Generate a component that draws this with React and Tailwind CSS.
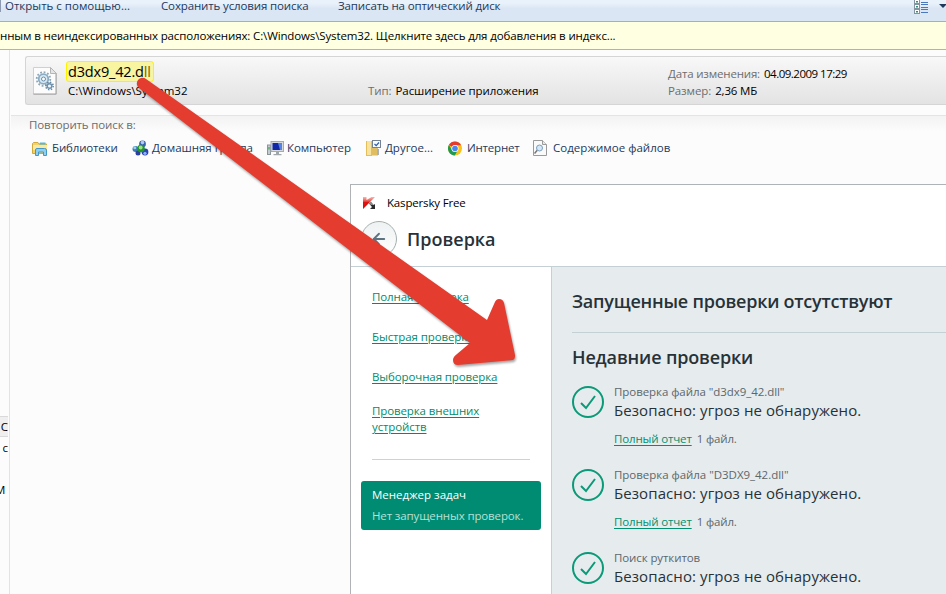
import { ArrowLeft } from "lucide-react";

const checks = [
  { id: 1, title: 'Проверка файла "d3dx9_42.dll"', files: "1 файл.", titleClass: "tracking-[-0.06px]" },
  { id: 2, title: 'Проверка файла "D3DX9_42.dll"', files: "1 файл.", titleClass: "tracking-[-0.03px]" },
  { id: 3, title: "Поиск руткитов", files: "", titleClass: "tracking-[-0.1px]" },
];

function LibraryIcon() {
  return (
    <svg width="16" height="16" viewBox="0 0 16 16">
      <path d="M0.5 3.5 L1.5 2.5 H6 L7 4 H14.5 V13.5 H0.5Z" fill="#f0d36b" stroke="#d2a93c" />
      <path d="M8 2.5 h5.5 v2 h-6z" fill="#57b7d8" />
      <path d="M1 5 H15 V10 H1Z" fill="#fae9a0" />
      <path d="M3.5 15.5 V10 Q3.5 8.5 5 8.5 H12.5 Q14.5 8.5 14.5 10 V15.5 H11.5 V12 H6.5 V15.5Z" fill="#8fd0ee" stroke="#4298c8" />
    </svg>
  );
}

function HomegroupIcon() {
  return (
    <svg width="17" height="16" viewBox="0 0 17 16">
      <circle cx="10.5" cy="4" r="3.4" fill="#3a62b0" />
      <circle cx="10.5" cy="2.6" r="1.8" fill="#b4caee" />
      <circle cx="3.5" cy="9" r="3" fill="#3c7bb4" />
      <circle cx="2.8" cy="7.8" r="1.5" fill="#9fd0e8" />
      <circle cx="13" cy="12" r="3.4" fill="#2743b8" />
      <circle cx="13" cy="13.3" r="1.6" fill="#8fb0f2" />
      <circle cx="6" cy="13" r="2.5" fill="#2b3f9c" />
      <circle cx="9" cy="8.5" r="3.8" fill="#24962b" />
      <circle cx="8.7" cy="7.5" r="1.9" fill="#a2e28b" />
    </svg>
  );
}

function ComputerIcon() {
  return (
    <svg width="17" height="16" viewBox="0 0 17 16">
      <rect x="0.5" y="5" width="3" height="9.5" fill="#c4cbd0" stroke="#8b949a" />
      <rect x="1.3" y="7" width="1.4" height="2.5" fill="#4bab5c" />
      <rect x="4" y="1.5" width="12.5" height="10" fill="#d6dadd" stroke="#a3abb1" />
      <rect x="5.5" y="3" width="9.5" height="7" fill="#1226a8" />
      <path d="M11 3 H15 V10 H13Z" fill="#5683df" />
      <path d="M9 12 h3 v2 h2.5 v1.2 h-8 v-1.2 h2.5z" fill="#a0a7ac" />
    </svg>
  );
}

function OtherIcon() {
  return (
    <svg width="16" height="16" viewBox="0 0 16 16">
      <path d="M0 1 H6 V16 H0Z" fill="#e3be5b" />
      <path d="M1 1 H5 V15 H1Z" fill="#f7e2a0" />
      <path d="M5 8 H12 V15.5 H5Z" fill="#e0bd60" />
      <path d="M11 9 h2 v6 h-2z" fill="#a9b1b8" />
      <rect x="6.5" y="0.5" width="8" height="7" fill="#f7fbff" stroke="#75828f" />
      <path d="M8.5 4 l1.7 1.7 l2.8 -3.2" fill="none" stroke="#2a5db0" strokeWidth="1.2" />
    </svg>
  );
}

function ChromeIcon() {
  return (
    <svg width="14" height="15" viewBox="0 0 14 14">
      <circle cx="7" cy="7" r="7" fill="#fbc116" />
      <path d="M7 7 L0.9 3.5 A7 7 0 0 1 13.1 3.7 L7 3.7Z" fill="#e33b2e" />
      <path d="M0.9 3.5 A7 7 0 0 0 6.8 14 L9.9 8.6 L7 7 L4 8.6Z" fill="#219a50" />
      <circle cx="7" cy="7" r="3.5" fill="#fff" />
      <circle cx="7" cy="7" r="2.8" fill="#4688f0" />
    </svg>
  );
}

function FileContentIcon() {
  return (
    <svg width="14" height="16" viewBox="0 0 14 16">
      <path d="M0.5 0.5 H9.5 L13.5 4.5 V15.5 H0.5Z" fill="#fafafa" stroke="#9a9a9a" />
      <path d="M9.5 0.5 V4.5 H13.5" fill="#e8e8e8" stroke="#9a9a9a" />
      <path d="M1.5 13.5 L4.5 10" stroke="#777" strokeWidth="1.5" />
      <circle cx="6.5" cy="8" r="3" fill="#d3e9f9" stroke="#7d9fbd" />
    </svg>
  );
}

function DllIcon() {
  return (
    <svg width="24" height="28" viewBox="0 0 24 28">
      <path d="M0.5 0.5 H17.5 L23.5 6.5 V27.5 H0.5Z" fill="#fcfcfc" stroke="#d0d0d0" />
      <path d="M23 6.5 V27 H0.5" fill="none" stroke="#9e9e9e" />
      <path d="M17.5 0.5 V6.5 H23.5Z" fill="#e5e5e5" stroke="#b5b5b5" />
      <circle cx="10.5" cy="12" r="6.8" fill="none" stroke="#8ea6b7" strokeWidth="1.8" strokeDasharray="1.8 1.76" />
      <circle cx="10.5" cy="12" r="4.8" fill="#d7eaf5" stroke="#8aabc2" strokeWidth="1.8" />
      <circle cx="10.5" cy="12" r="2" fill="#fcfcfc" stroke="#6b8da8" />
      <circle cx="16.5" cy="19" r="3.7" fill="none" stroke="#67849c" strokeWidth="1.5" strokeDasharray="1.4 1.5" />
      <circle cx="16.5" cy="19" r="2.3" fill="#eef6fb" stroke="#6e93b2" strokeWidth="1.5" />
    </svg>
  );
}

function ViewIcon() {
  return (
    <svg width="15" height="14" viewBox="0 0 15 14">
      {[-1, 4, 9].map((y) => (
        <g key={y}>
          <rect x="0.5" y={y + 0.5} width="5" height="4" fill="#fff" stroke="#8592a0" />
          <rect x="2" y={y + 2} width="2" height="1.5" fill="#2f8f78" />
          <path d={`M7 ${y + 0.5} h7 M7 ${y + 3.5} h7`} stroke="#4a78bd" />
        </g>
      ))}
    </svg>
  );
}

function KasperskyLogo() {
  return (
    <svg width="13" height="13" viewBox="0 0 13 13">
      <defs>
        <linearGradient id="kred" x1="0" y1="0" x2="0" y2="1">
          <stop offset="0" stopColor="#f6b9b6" />
          <stop offset="0.35" stopColor="#e8504a" />
          <stop offset="0.45" stopColor="#df1410" />
          <stop offset="1" stopColor="#d80d0d" />
        </linearGradient>
      </defs>
      <path d="M0 0 H3.5 V3 L8.5 0 H12 L6 6 L0 12Z" fill="url(#kred)" />
      <path d="M6 6.5 L8 5 L10.5 8 L12 7 V12 H7 L9 10Z" fill="#2a2a2a" />
      <path d="M6 6.5 L8 5 L10.5 8 H8Z" fill="#8a8a8a" />
    </svg>
  );
}

function CheckCircle() {
  return (
    <svg width="32" height="32" viewBox="0 0 32 32" className="shrink-0">
      <circle cx="16" cy="16" r="15" fill="none" stroke="#0a9a78" strokeWidth="2" />
      <path d="M9 17 L14 22 L23 10" fill="none" stroke="#0a9a78" strokeWidth="2" />
    </svg>
  );
}

const places = [
  { label: "Библиотеки", Icon: LibraryIcon, box: "w-[100px] gap-1", text: "tracking-[-0.15px]" },
  { label: "Домашняя группа", Icon: HomegroupIcon, box: "w-[135px] gap-[3px]", text: "tracking-[-0.02px]" },
  { label: "Компьютер", Icon: ComputerIcon, box: "w-[99px] gap-[3px]", text: "tracking-[-0.1px]" },
  { label: "Другое...", Icon: OtherIcon, box: "w-[82px] gap-[3px]", text: "" },
  { label: "Интернет", Icon: ChromeIcon, box: "w-[85px] gap-[5px]", text: "tracking-[-0.2px]" },
  { label: "Содержимое файлов", Icon: FileContentIcon, box: "gap-[6px]", text: "tracking-[0.03px]" },
];

function Explorer() {
  return (
    <div className="flex h-full flex-col text-[11.5px] leading-4 text-black">
      {/* toolbar */}
      <div className="flex h-[22px] shrink-0 border-b border-[#a0afc3] bg-linear-to-b from-[#e9f2fb] from-15% to-[#dae6f4] to-40% leading-[11px] text-[#1e395b]">
        <div className="h-3 w-px bg-[#8b9ab0]" />
        <div className="ml-1 w-[156px]">Открыть с помощью...</div>
        <div className="w-[177px] tracking-[-0.13px]">Сохранить условия поиска</div>
        <div className="flex-1 tracking-[-0.13px]">Записать на оптический диск</div>
        <ViewIcon />
        <svg width="8" height="4" viewBox="0 0 8 4" className="mt-1 ml-[10px] mr-[-1px]">
          <path d="M0 0 H8 L4 4Z" fill="#1e395b" />
        </svg>
      </div>

      {/* index notice */}
      <div className="flex h-7 shrink-0 items-center whitespace-nowrap border-b border-[#b4b4a6] bg-[#ffffe1] tracking-[-0.13px]">
        нным в неиндексированных расположениях: C:\Windows\System32. Щелкните здесь для добавления в индекс...
      </div>

      <div className="flex flex-1">
        {/* clipped navigation tree */}
        <div className="w-[10px] shrink-0 overflow-hidden border-r border-[#dbe5f2] bg-[#fcfcfc] pt-[366px]">
          <div className="flex h-[21px] w-2 items-center justify-end border-y border-[#d9d9d9] bg-[#efefef]">C</div>
          <div className="mt-[3px] w-2 text-right">с</div>
          <div className="mt-[26px] ml-[-5px]">M</div>
        </div>

        <div className="flex-1 bg-[#fcfcfc]">
          <div className="mt-1.5 ml-[15px] flex h-[49px] rounded-l-[3px] border border-r-0 border-[#d5d5d5] bg-linear-to-b from-[#f8f8f8] to-[#e3e3e3]">
            <div className="ml-[7px] mt-[10px] w-[35px]">
              <DllIcon />
            </div>
            <div className="w-[300px]">
              <div className="relative mt-[5px] text-[14.5px] leading-5 tracking-[-0.18px]">
                <div className="absolute top-[-1px] left-[-2px] h-[21px] w-[88px] rounded-[3px] border border-[#fff200] bg-[#f8f4a0]" />
                <span className="relative">d3dx9_42.d<span className="text-[#7a6410]">ll</span></span>
              </div>
              <div className="mt-px">C:\Windows\System32</div>
            </div>
            <div className="mt-[26px] w-[300px] tracking-[-0.08px]">
              <span className="mr-1 text-[#6d6d6d]">Тип:</span>
              Расширение приложения
            </div>
            <div className="mt-2 leading-[17px]">
              <div>
                <span className="mr-1 tracking-[-0.17px] text-[#6d6d6d]">Дата изменения:</span>
                <span className="tracking-[-0.5px]">04.09.2009 17:29</span>
              </div>
              <div>
                <span className="mr-1 tracking-[-0.1px] text-[#6d6d6d]">Размер:</span>
                <span className="tracking-[-0.15px]">2,36 МБ</span>
              </div>
            </div>
          </div>

          <div className="mt-[10px] ml-px h-20 border-t border-[#e4e4e4] bg-linear-to-b from-[#f3f3f3] to-[#fcfcfc] to-20%">
            <div className="ml-[18px] pt-px tracking-[-0.14px] text-[#6d6d6d]">Повторить поиск в:</div>
            <div className="mt-[7px] ml-[21px] flex text-[#1e395b]">
              {places.map(({ label, Icon, box, text }) => (
                <div key={label} className={`flex items-center whitespace-nowrap ${box}`}>
                  <Icon />
                  <span className={text}>{label}</span>
                </div>
              ))}
            </div>
          </div>
        </div>
      </div>
    </div>
  );
}

function KasperskyWindow() {
  return (
    <div className="absolute top-[184px] left-[350px] flex h-[410px] w-[596px] flex-col border-t border-l border-[#b0b3b5] bg-white text-[11.5px] leading-4">
      <div className="h-[82px] shrink-0 border-b border-[#c5d0d6]">
        <div className="flex pt-[10px] pl-3 text-black">
          <div className="mt-0.5 w-6"><KasperskyLogo /></div>
          <span className="tracking-[-0.17px]">Kaspersky Free</span>
        </div>
        <div className="mt-[10px] flex items-center pl-[10px]">
          <div className="flex h-9 w-9 items-center justify-center rounded-full border border-[#a4aeae] bg-linear-to-b from-[#eef2f2] to-white">
            <ArrowLeft size={18} color="#5d7380" strokeWidth={2.5} />
          </div>
          <div className="ml-[10px] text-lg font-semibold text-[#263238]">Проверка</div>
        </div>
      </div>

      <div className="flex flex-1">
        <div className="w-[201px] shrink-0 border-r border-[#c5d0d6]">
          <div className="ml-[21px] flex h-[193px] w-[158px] flex-col border-b border-[#c9d3da] pt-[22px] tracking-[-0.11px] text-[#008c6c] underline underline-offset-2">
            <div className="h-10">Полная проверка</div>
            <div className="h-10">Быстрая проверка</div>
            <div className="h-[34px]">Выборочная проверка</div>
            <div>Проверка внешних<br />устройств</div>
          </div>
          <div className="mt-[21px] ml-[10px] h-[49px] w-[180px] rounded-[3px] bg-[#008c73] pt-1.5 pl-[11px] whitespace-nowrap">
            <div className="text-white">Менеджер задач</div>
            <div className="mt-[5px] tracking-[-0.13px] text-[#b5e0d6]">Нет запущенных проверок.</div>
          </div>
        </div>

        <div className="flex-1 overflow-hidden bg-[#e6ebed] pl-5 text-[#263238]">
          <div className="h-[66px] border-b border-[#c3d0d6] pt-[22px] text-lg leading-6 font-semibold tracking-[-0.22px]">Запущенные проверки отсутствуют</div>
          <div className="mt-3 mb-[17px] text-lg leading-6 font-semibold tracking-[-0.15px]">Недавние проверки</div>
          {checks.map((c) => (
            <div key={c.id} className="flex h-[83px]">
              <CheckCircle />
              <div className="ml-[10px] mt-[-2px]">
                <div className={`text-[#5c676c] ${c.titleClass}`}>{c.title}</div>
                <div className="mt-[-1px] text-[15px] leading-[22px] tracking-[0.09px]">Безопасно: угроз не обнаружено.</div>
                {c.files && (
                  <div className="mt-[10px] flex gap-[5px] tracking-[-0.15px]">
                    <span className="text-[#009070] underline underline-offset-2">Полный отчет</span>
                    <span className="text-[#5c676c]">{c.files}</span>
                  </div>
                )}
              </div>
            </div>
          ))}
        </div>
      </div>
    </div>
  );
}

export default function App() {
  return (
    <div className="relative h-[594px] w-[946px] overflow-hidden bg-[#fcfcfc] font-['Open_Sans','Noto_Sans',sans-serif]">
      <Explorer />
      <KasperskyWindow />

      {/* red pointer from the file to the scan window */}
      <svg width="946" height="594" viewBox="0 0 946 594" className="pointer-events-none absolute inset-0 drop-shadow-[1px_2px_1px_rgba(0,0,0,0.35)]">
        <path
          d="M146 79 L487 320 L494.5 303 Q496 299 499 299 Q503 299 504 303 L515 355 Q515.5 360 511 360.3 L458 365 Q453 365 453 360 Q453 357 457 354 L470 343 L139 88 A5.5 5.5 0 0 1 146 79Z"
          fill="#e53c30"
        />
      </svg>
    </div>
  );
}
